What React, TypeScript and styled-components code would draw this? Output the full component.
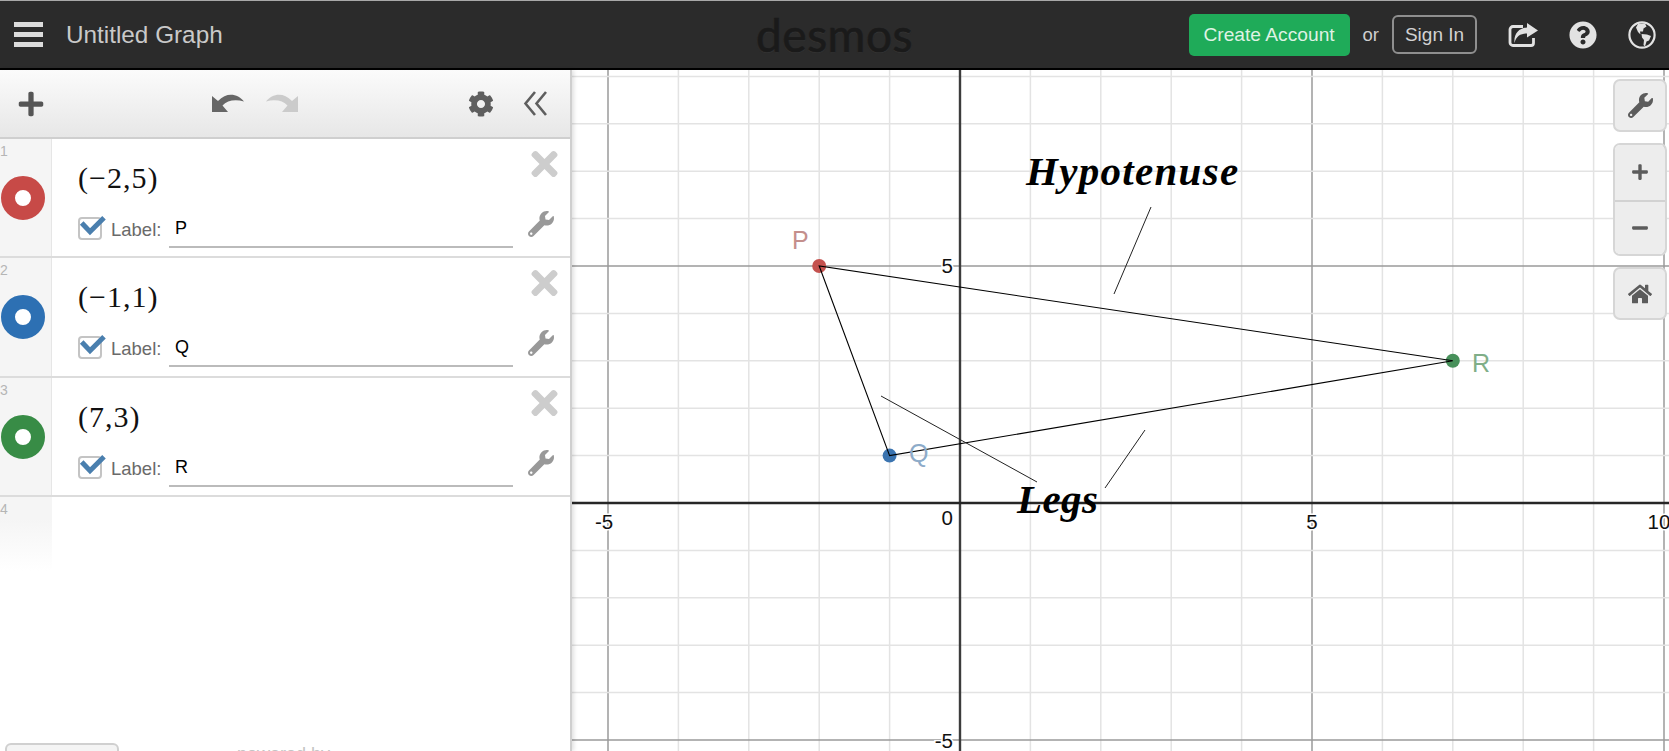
import React from 'react';
import styled, { createGlobalStyle } from 'styled-components';
import { FaCog, FaHome, FaMinus, FaPlus, FaQuestionCircle, FaTimes, FaWrench } from 'react-icons/fa';

const GlobalStyle = createGlobalStyle`
    html, body {
        margin: 0;
        height: 100%;
        overflow: hidden;
        background: #fff;
        font-family: "Liberation Sans", Arial, sans-serif;
    }
`;

const expressions = [
    { id: 1, color: '#c74a47', math: '(−2,5)', label: 'P' },
    { id: 2, color: '#2d70b3', math: '(−1,1)', label: 'Q' },
    { id: 3, color: '#388c46', math: '(7,3)', label: 'R' },
];

// graph coordinates -> page pixels
const X0 = 960;
const Y0 = 503;
const UX = 70.4;
const UY = 47.4;
const px = (x: number) => X0 + x * UX;
const py = (y: number) => Y0 - y * UY;

const xTicks = Array.from({ length: 16 }, (_, i) => i - 5);
const yTicks = Array.from({ length: 15 }, (_, i) => i - 5);

const points = [
    { x: -2, y: 5, fill: '#c4524f' },
    { x: -1, y: 1, fill: '#3b74b0' },
    { x: 7, y: 3, fill: '#47905a' },
];

const App = () => (
    <Page>
        <GlobalStyle />
        <Header>
            <HeaderLeft>
                <Hamburger>
                    <span />
                    <span />
                    <span />
                </Hamburger>
                <Title>Untitled Graph</Title>
            </HeaderLeft>
            <Logo>desmos</Logo>
            <HeaderRight>
                <CreateButton>Create Account</CreateButton>
                <OrText>or</OrText>
                <SignIn>Sign In</SignIn>
                <HeaderIcons>
                    <svg width="30" height="24" viewBox="0 0 30 24">
                        <path d="M15 3.5 H5 a3 3 0 0 0 -3 3 V19.5 a3 3 0 0 0 3 3 H23 a2.5 2.5 0 0 0 2.5 -2.5 V15" fill="none" stroke="#e2e2e2" strokeWidth="2.8" />
                        <path d="M19 0 L30 7.5 L19 14.5 V10.5 C13 10.5 8 13 6.5 20 C5.5 11 11 5 19 4.5 Z" fill="#e2e2e2" />
                    </svg>
                    <FaQuestionCircle size={28} />
                    <svg width="28" height="28" viewBox="0 0 28 28">
                        <circle cx="14" cy="14" r="12.6" fill="none" stroke="#e2e2e2" strokeWidth="2.2" />
                        <path d="M10 3 L17 2.5 L18.5 5.5 L15.5 7.5 L15 10.5 L12 10.5 L12.5 13.5 L10 11 L8 6.5 Z" fill="#e2e2e2" />
                        <path d="M13.5 13 L19 13.5 L23 15 L21 19.5 L18.5 20.5 L17 25.5 L15.5 24 L16 19 L14 16.5 Z" fill="#e2e2e2" />
                    </svg>
                </HeaderIcons>
            </HeaderRight>
        </Header>
        <Main>
            <Panel>
                <Toolbar>
                    <FaPlus size={28} color="#555" />
                    <HistoryGroup>
                        <HistoryIcon $color="#666" />
                        <HistoryIcon $color="#cbcbcb" $flip />
                    </HistoryGroup>
                    <ToolbarRight>
                        <FaCog size={26} color="#5e5e5e" />
                        <svg width="24" height="25" viewBox="0 0 24 25">
                            <path d="M12 1 L2.5 12.5 L12 24 M23 1 L13.5 12.5 L23 24" fill="none" stroke="#5e5e5e" strokeWidth="2.6" />
                        </svg>
                    </ToolbarRight>
                </Toolbar>
                <ExpressionList>
                    {expressions.map(item => (
                        <ExpressionRow key={item.id}>
                            <Gutter>
                                <RowNumber>{item.id}</RowNumber>
                                <ColorDot $color={item.color} />
                            </Gutter>
                            <RowBody>
                                <MathLine>
                                    <MathText>{item.math}</MathText>
                                    <RemoveIcon />
                                </MathLine>
                                <LabelLine>
                                    <CheckBox>
                                        <svg width="28" height="28" viewBox="0 0 28 28">
                                            <path d="M3.7 10 L12 18.7 L26 4.7" fill="none" stroke="#4a7fae" strokeWidth="5" />
                                        </svg>
                                    </CheckBox>
                                    <LabelCaption>Label:</LabelCaption>
                                    <LabelInput>{item.label}</LabelInput>
                                    <RowWrench />
                                </LabelLine>
                            </RowBody>
                        </ExpressionRow>
                    ))}
                    <EmptyRow>
                        <FadingGutter>
                            <RowNumber>4</RowNumber>
                        </FadingGutter>
                    </EmptyRow>
                </ExpressionList>
                <PanelFooter>
                    <FooterButton />
                    <PoweredBy>powered by</PoweredBy>
                </PanelFooter>
            </Panel>
            <Graph>
                <GraphCanvas viewBox="572 70 1097 681">
                    {xTicks.map(t => (
                        <line key={t} x1={px(t)} x2={px(t)} y1={70} y2={751}
                            stroke={t % 5 === 0 ? '#9a9a9a' : '#e3e3e3'} strokeWidth={1.5} />
                    ))}
                    {yTicks.map(t => (
                        <line key={t} x1={572} x2={1669} y1={py(t)} y2={py(t)}
                            stroke={t % 5 === 0 ? '#9a9a9a' : '#e3e3e3'} strokeWidth={1.5} />
                    ))}
                    <line x1={X0} x2={X0} y1={70} y2={751} stroke="#3c3c3c" strokeWidth={2.4} />
                    <line x1={572} x2={1669} y1={Y0} y2={Y0} stroke="#262626" strokeWidth={2.4} />

                    <AxisLabel x={604} y={529} textAnchor="middle">-5</AxisLabel>
                    <AxisLabel x={1312} y={529} textAnchor="middle">5</AxisLabel>
                    <AxisLabel x={1659} y={529} textAnchor="middle">10</AxisLabel>
                    <AxisLabel x={953} y={525} textAnchor="end">0</AxisLabel>
                    <AxisLabel x={953} y={273} textAnchor="end">5</AxisLabel>
                    <AxisLabel x={953} y={748} textAnchor="end">-5</AxisLabel>

                    {points.map(p => (
                        <circle key={p.x} cx={px(p.x)} cy={py(p.y)} r={7} fill={p.fill} />
                    ))}
                    <polygon points={points.map(p => `${px(p.x)},${py(p.y)}`).join(' ')} fill="none" stroke="#000" strokeWidth={1.1} />

                    <line x1={1151} y1={207} x2={1114} y2={294} stroke="#222" strokeWidth={1} />
                    <line x1={881} y1={396} x2={1037} y2={482} stroke="#222" strokeWidth={1} />
                    <line x1={1145} y1={430} x2={1105} y2={488} stroke="#222" strokeWidth={1} />

                    <PointLabel x={792} y={249} $color="#c48f8c">P</PointLabel>
                    <PointLabel x={909} y={462} $color="#8dabc9">Q</PointLabel>
                    <PointLabel x={1472} y={372} $color="#80ae88">R</PointLabel>

                    <Annotation x={1026} y={185} $spacing={1.3}>Hypotenuse</Annotation>
                    <Annotation x={1017} y={513} $spacing={0.4}>Legs</Annotation>
                </GraphCanvas>
                <GraphControls>
                    <ControlButton><FaWrench size={25} /></ControlButton>
                    <ZoomGroup>
                        <ControlButton $joined><FaPlus size={18} /></ControlButton>
                        <ControlButton $joined><FaMinus size={18} /></ControlButton>
                    </ZoomGroup>
                    <ControlButton><FaHome size={24} /></ControlButton>
                </GraphControls>
            </Graph>
        </Main>
    </Page>
);

export default App;

const HistoryIcon = ({ $color, $flip }: { $color: string; $flip?: boolean }) => (
    <HistorySvg viewBox="0 0 32 19" $flip={$flip}>
        <path d="M0 3 L0 19 L16 19 L10.5 12.5 C15 7.5 23 6 32 8.5 C26 1 15 -1.5 6 8 Z" fill={$color} />
    </HistorySvg>
);

const Page = styled.div`
    width: 100vw;
    height: 100vh;
    display: flex;
    flex-direction: column;
    overflow: hidden;
`;
const Header = styled.header`
    flex: 0 0 70px;
    box-sizing: border-box;
    display: grid;
    grid-template-columns: 1fr auto 1fr;
    align-items: center;
    background: #2b2b2b;
    border-top: 1px solid #a8a8a8;
    border-bottom: 2px solid #000;
`;
const HeaderLeft = styled.div`
    display: flex;
    align-items: center;
    gap: 23px;
    padding-left: 14px;
`;
const Hamburger = styled.div`
    width: 29px;
    display: flex;
    flex-direction: column;
    gap: 5px;
    span {
        height: 5px;
        background: #dcdcdc;
    }
`;
const Title = styled.div`
    font-size: 24.3px;
    color: #c9c9c9;
`;
const Logo = styled.div`
    font-family: Lato, sans-serif;
    font-weight: 400;
    font-size: 46px;
    line-height: 50px;
    letter-spacing: 0.5px;
    color: #1a1a1a;
    -webkit-text-stroke: 0.7px #1a1a1a;
    text-shadow: 0 1px 1px #363636;
`;
const HeaderRight = styled.div`
    display: flex;
    align-items: center;
    justify-content: flex-end;
    padding-right: 13px;
`;
const CreateButton = styled.div`
    width: 161px;
    height: 42px;
    display: flex;
    align-items: center;
    justify-content: center;
    background: #1fab59;
    border-radius: 5px;
    color: #dff2e4;
    font-size: 19.2px;
`;
const OrText = styled.span`
    margin: 0 13px;
    color: #cfcfcf;
    font-size: 18.5px;
`;
const SignIn = styled.div`
    box-sizing: border-box;
    width: 85px;
    height: 39px;
    display: flex;
    align-items: center;
    justify-content: center;
    border: 2px solid #8f8f8f;
    border-radius: 6px;
    color: #d2d2d2;
    font-size: 19px;
`;
const HeaderIcons = styled.div`
    display: flex;
    align-items: center;
    gap: 31px;
    margin-left: 31px;
    color: #e2e2e2;
`;
const Main = styled.div`
    flex: 1;
    display: flex;
    min-height: 0;
`;
const Panel = styled.aside`
    position: relative;
    z-index: 1;
    flex: 0 0 572px;
    box-sizing: border-box;
    display: flex;
    flex-direction: column;
    background: #fff;
    border-right: 2px solid #cfcfcf;
    box-shadow: 2px 0 4px rgba(0, 0, 0, 0.12);
`;
const Toolbar = styled.div`
    flex: 0 0 69px;
    box-sizing: border-box;
    display: flex;
    align-items: center;
    padding: 0 23px 0 17px;
    background: linear-gradient(#fbfbfb, #e7e7e7);
    border-bottom: 2px solid #cfcfcf;
`;
const HistoryGroup = styled.div`
    display: flex;
    gap: 22px;
    margin: 0 0 2px 167px;
`;
const HistorySvg = styled.svg<{ $flip?: boolean }>`
    width: 32px;
    height: 19px;
    ${props => props.$flip && 'transform: scaleX(-1);'}
`;
const ToolbarRight = styled.div`
    display: flex;
    align-items: center;
    gap: 29px;
    margin-left: auto;
`;
const ExpressionList = styled.div`
    flex: 1;
    min-height: 0;
`;
const ExpressionRow = styled.div`
    height: 119.3px;
    box-sizing: border-box;
    display: grid;
    grid-template-columns: 52px 1fr;
    border-bottom: 2px solid #dcdcdc;
`;
const Gutter = styled.div`
    display: flex;
    flex-direction: column;
    background: #f5f5f5;
    border-right: 1px solid #e6e6e6;
`;
const RowNumber = styled.div`
    margin-top: 4px;
    font-size: 14px;
    line-height: 16px;
    color: #b5b5b5;
`;
const ColorDot = styled.div<{ $color: string }>`
    box-sizing: border-box;
    width: 44px;
    height: 44px;
    margin: 17px 0 0 1px;
    border-radius: 50%;
    border: 14.5px solid ${props => props.$color};
    background: #fff;
`;
const RowBody = styled.div`
    display: flex;
    flex-direction: column;
    padding: 0 10px 0 26px;
`;
const MathLine = styled.div`
    height: 70px;
    display: flex;
    justify-content: space-between;
    align-items: flex-start;
`;
const MathText = styled.div`
    margin-top: 22px;
    font-family: "Liberation Serif", "Times New Roman", serif;
    font-size: 30px;
    line-height: 34px;
    letter-spacing: 1px;
    color: #111;
`;
const RemoveIcon = styled(FaTimes)`
    width: 33px;
    height: 38px;
    margin: 6px -1px 0 0;
    color: #cdcdcd;
`;
const LabelLine = styled.div`
    display: flex;
    align-items: flex-start;
`;
const CheckBox = styled.div`
    position: relative;
    box-sizing: border-box;
    flex: 0 0 24px;
    height: 23px;
    margin-top: 8px;
    border: 2px solid #c4c4c4;
    border-radius: 4px;
    svg {
        position: absolute;
        left: -2px;
        top: -6px;
    }
`;
const LabelCaption = styled.span`
    margin: 10px 0 0 9px;
    width: 58px;
    font-size: 18.5px;
    line-height: 22px;
    color: #6a6a6a;
`;
const LabelInput = styled.div`
    box-sizing: border-box;
    flex: 0 0 344px;
    height: 39px;
    padding: 8px 0 0 6px;
    font-size: 18px;
    line-height: 22px;
    color: #000;
    border-bottom: 2px solid #bbb;
`;
const RowWrench = styled(FaWrench)`
    width: 26px;
    height: 26px;
    margin: 2px 0 0 15px;
    color: #999;
`;
const EmptyRow = styled.div`
    height: 74px;
    display: grid;
    grid-template-columns: 52px 1fr;
`;
const FadingGutter = styled.div`
    background: linear-gradient(#f5f5f5 30%, #fff);
`;
const PanelFooter = styled.div`
    flex: 0 0 8px;
    display: flex;
    overflow: hidden;
`;
const FooterButton = styled.div`
    box-sizing: border-box;
    flex: 0 0 114px;
    height: 40px;
    margin-left: 5px;
    background: #f4f4f4;
    border: 2px solid #d0d0d0;
    border-radius: 6px;
`;
const PoweredBy = styled.div`
    margin: 0 0 0 118px;
    font-size: 18px;
    line-height: 22px;
    height: 22px;
    color: #c4c4c4;
`;
const Graph = styled.main`
    position: relative;
    flex: 1;
    min-width: 0;
    overflow: hidden;
`;
const GraphCanvas = styled.svg`
    display: block;
    width: 100%;
    height: 100%;
`;
const AxisLabel = styled.text`
    font-family: "Liberation Sans", Arial, sans-serif;
    font-size: 20.5px;
    fill: #111;
    stroke: #fff;
    stroke-width: 3px;
    paint-order: stroke;
`;
const PointLabel = styled.text<{ $color: string }>`
    font-family: "Liberation Sans", Arial, sans-serif;
    font-size: 25px;
    fill: ${props => props.$color};
`;
const Annotation = styled.text<{ $spacing: number }>`
    font-family: "Liberation Serif", "Times New Roman", serif;
    font-size: 41px;
    font-weight: 700;
    font-style: italic;
    letter-spacing: ${props => props.$spacing}px;
    fill: #000;
`;
const GraphControls = styled.div`
    position: absolute;
    top: 9px;
    right: 2px;
    width: 54px;
    display: flex;
    flex-direction: column;
    gap: 11px;
`;
const ControlButton = styled.div<{ $joined?: boolean }>`
    box-sizing: border-box;
    height: ${props => (props.$joined ? '54.5px' : '53px')};
    display: flex;
    align-items: center;
    justify-content: center;
    background: #ededed;
    color: #5c5c5c;
    border: ${props => (props.$joined ? '0' : '2px solid #d6d6d6')};
    border-radius: ${props => (props.$joined ? '0' : '7px')};
    & + & {
        border-top: 2px solid #d2d2d2;
    }
`;
const ZoomGroup = styled.div`
    display: flex;
    flex-direction: column;
    overflow: hidden;
    border: 2px solid #d6d6d6;
    border-radius: 7px;
`;
